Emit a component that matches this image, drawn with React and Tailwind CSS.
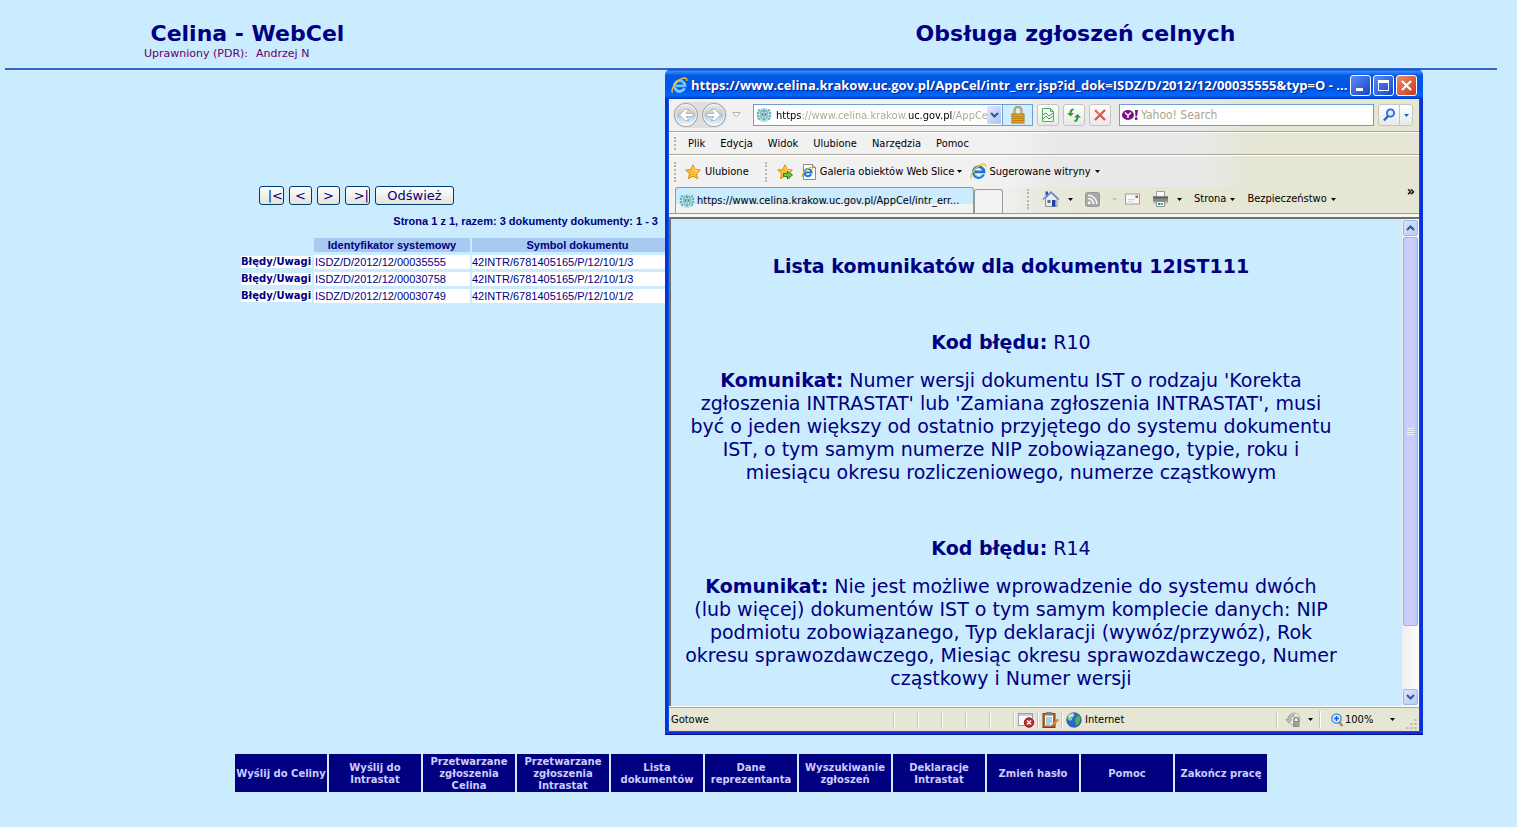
import React from 'react';

const documents = [
  { id: 'ISDZ/D/2012/12/00035555', symbol: '42INTR/6781405165/P/12/10/1/3' },
  { id: 'ISDZ/D/2012/12/00030758', symbol: '42INTR/6781405165/P/12/10/1/3' },
  { id: 'ISDZ/D/2012/12/00030749', symbol: '42INTR/6781405165/P/12/10/1/2' },
];

const navItems = [
  'Wyślij do Celiny',
  'Wyślij do Intrastat',
  'Przetwarzane zgłoszenia Celina',
  'Przetwarzane zgłoszenia Intrastat',
  'Lista dokumentów',
  'Dane reprezentanta',
  'Wyszukiwanie zgłoszeń',
  'Deklaracje Intrastat',
  'Zmień hasło',
  'Pomoc',
  'Zakończ pracę',
];

const menuItems = ['Plik', 'Edycja', 'Widok', 'Ulubione', 'Narzędzia', 'Pomoc'];

const messages = [
  {
    code: 'R10',
    text: "Numer wersji dokumentu IST o rodzaju 'Korekta zgłoszenia INTRASTAT' lub 'Zamiana zgłoszenia INTRASTAT', musi być o jeden większy od ostatnio przyjętego do systemu dokumentu IST, o tym samym numerze NIP zobowiązanego, typie, roku i miesiącu okresu rozliczeniowego, numerze cząstkowym",
  },
  {
    code: 'R14',
    text: 'Nie jest możliwe wprowadzenie do systemu dwóch (lub więcej) dokumentów IST o tym samym komplecie danych: NIP podmiotu zobowiązanego, Typ deklaracji (wywóz/przywóz), Rok okresu sprawozdawczego, Miesiąc okresu sprawozdawczego, Numer cząstkowy i Numer wersji',
  },
];

// Icons

function IeIcon({ color = '#1b78d0' }) {
  return (
    <svg width="17" height="17" viewBox="0 0 17 17" className="shrink-0">
      <path d="M13.6 11.2A5.4 5.4 0 1 1 14 8.8H5" fill="none" stroke={color} strokeWidth="2.8" />
      <path d="M12.8 11.2A4.6 4.6 0 0 1 4.6 11" fill="none" stroke="#9adcff" strokeWidth="1" />
      <path d="M1.6 15.6C-.6 13 4 5.6 9.4 2.4 13 .4 16.4.4 15.6 3.8" fill="none" stroke="#f7c02c" strokeWidth="1.5" />
    </svg>
  );
}

function IePageIcon() {
  return (
    <svg width="16" height="16" viewBox="0 0 16 16" className="shrink-0">
      <path d="M2.5.5h9l3 3v12h-12z" fill="#fff" stroke="#8a8a8a" />
      <path d="M11.5.5v3h3" fill="#ddd" stroke="#8a8a8a" />
      <path d="M10.2 10.2A3.6 3.6 0 1 1 10.6 8.4H4.5" fill="none" stroke="#1b78d0" strokeWidth="2" />
      <path d="M1 13C.4 10.6 4 5.8 8 4c2.600-1 4-.6 3.400 1.400" fill="none" stroke="#f0b41c" strokeWidth="1.2" />
    </svg>
  );
}

function CrestIcon() {
  return (
    <svg width="16" height="16" viewBox="0 0 16 16" className="shrink-0">
      <circle cx="8" cy="8" r="7" fill="#b4e0e3" />
      <path d="M3.500 2.500C1 5 1 10 4 13M12.500 2.500C15 5 15 10 12 13" fill="none" stroke="#5fb0ba" strokeWidth="2" strokeDasharray="2 1" />
      <path d="M5 4h6v4c0 3-1.500 4-3 5-1.500-1-3-2-3-5z" fill="#d9f2f3" stroke="#5a9fac" />
      <path d="M8 2v11M6.500 6v3M9.500 6v3" stroke="#4f8f9c" />
    </svg>
  );
}

function StarIcon({ withArrow = false }) {
  return (
    <svg width="16" height="16" viewBox="0 0 16 16" className="shrink-0">
      <path d="M8 .8l2.200 4.700 5.200.6-3.900 3.500 1.100 5.100L8 12.200l-4.600 2.500 1.100-5.100L.6 6.100l5.200-.6z" fill="#fbbd2c" stroke="#e08a12" />
      <path d="M8 3l1.500 3.300 3 .4-2.500 1.800" fill="none" stroke="#ffe595" />
      {withArrow && <path d="M6.500 9.500h4V7.200L15.500 11l-5 3.800v-2.300h-4z" fill="#5ecb46" stroke="#24861d" />}
    </svg>
  );
}

function RoundArrow({ flip = false }) {
  return (
    <svg width="26" height="26" viewBox="0 0 26 26">
      <defs>
        <linearGradient id="roundFill" x1="0" y1="0" x2="0" y2="1">
          <stop offset="0" stopColor="#ededed" />
          <stop offset=".5" stopColor="#c2c4c6" />
          <stop offset=".62" stopColor="#b9daf0" />
          <stop offset="1" stopColor="#f6fcff" />
        </linearGradient>
      </defs>
      <circle cx="13" cy="13" r="11.500" fill="url(#roundFill)" stroke="#9a9a9a" />
      <circle cx="13" cy="13" r="10.400" fill="none" stroke="#fff" strokeOpacity=".8" />
      <path
        d={flip ? 'M6 11.500h7L10 7.500h4l5.500 5.500-5.500 5.500h-4l3-4H6z' : 'M20 11.500h-7l3-4h-4L6.500 13l5.500 5.500h4l-3-4h7z'}
        fill="#fff"
        stroke="#a9adb0"
        strokeWidth=".8"
      />
    </svg>
  );
}

function LockIcon() {
  return (
    <svg width="16" height="18" viewBox="0 0 16 18">
      <path d="M4.500 9V4.500a3.500 3.500 0 0 1 7 0V9" fill="none" stroke="#8f7a3a" strokeWidth="2" />
      <path d="M4.500 9V4.500a3.500 3.500 0 0 1 7 0V9" fill="none" stroke="#d9cf9c" strokeWidth=".8" />
      <rect x="2" y="8" width="12" height="9" fill="#e8a91c" stroke="#a87410" />
      <path d="M3 10.500h10M3 12.500h10M3 14.500h10" stroke="#b97c10" />
    </svg>
  );
}

function CompatIcon() {
  return (
    <svg width="14" height="16" viewBox="0 0 14 16">
      <path d="M1.500 1.500h8l3 3v10h-11z" fill="#f3fbf2" stroke="#5aa85a" />
      <path d="M9.500 1.500v3h3" fill="none" stroke="#5aa85a" />
      <path d="M2 8l3-2 3 3 4-3M2 12l3-3 3 3 4-3" fill="none" stroke="#3f9a43" />
    </svg>
  );
}

function RefreshIcon() {
  return (
    <svg width="16" height="16" viewBox="0 0 16 16">
      <path d="M7.500 2.500C5.500 2.500 4.500 4 4.500 6.500" fill="none" stroke="#2c9c33" strokeWidth="2" />
      <path d="M1 6h7L4.500 9.500z" fill="#2c9c33" />
      <path d="M8.500 14c2 0 3-1.500 3-4.500" fill="none" stroke="#2c9c33" strokeWidth="2" />
      <path d="M8 10.500h7L11.500 7z" fill="#2c9c33" />
    </svg>
  );
}

function StopIcon() {
  return (
    <svg width="14" height="14" viewBox="0 0 14 14">
      <path d="M2 2l10 10M12 2L2 12" stroke="#d9534f" strokeWidth="2.200" />
      <path d="M2 2l5 5" stroke="#ee8d87" strokeWidth="1" />
    </svg>
  );
}

function YahooIcon() {
  return (
    <svg width="17" height="14" viewBox="0 0 17 14" className="shrink-0">
      <ellipse cx="6" cy="7" rx="6" ry="5" fill="#7b1082" />
      <path d="M3 4.500l3 3 3-3M6 7.500V10" fill="none" stroke="#fff" strokeWidth="1.500" />
      <path d="M13 2h3l-1 6.500h-1.500z" fill="#7b1082" />
      <circle cx="14.200" cy="10.700" r="1.400" fill="#7b1082" />
    </svg>
  );
}

function SearchIcon() {
  return (
    <svg width="14" height="14" viewBox="0 0 14 14">
      <circle cx="8.500" cy="5" r="3.600" fill="#d9eeff" stroke="#2367d1" strokeWidth="1.800" />
      <path d="M6 8l-4 4.500" stroke="#2367d1" strokeWidth="2.400" />
    </svg>
  );
}

function HomeIcon() {
  return (
    <svg width="18" height="18" viewBox="0 0 18 18">
      <path d="M3.500 1.500h2.500v4h-2.500z" fill="#2a48c8" />
      <path d="M3.500 8.500L9 3l6 5.500v8H3.500z" fill="#e9ebee" stroke="#8c94a0" />
      <path d="M1 9.500L9 2l8 7.500" fill="none" stroke="#5d8fd0" strokeWidth="1.600" />
      <rect x="10" y="10" width="3.500" height="6.500" fill="#1e3fae" />
      <rect x="5.500" y="10" width="3" height="3" fill="#6b6b6b" />
    </svg>
  );
}

function FeedIcon() {
  return (
    <svg width="15" height="15" viewBox="0 0 15 15">
      <rect x=".5" y=".5" width="14" height="14" rx="2" fill="#a9a9a9" stroke="#989898" />
      <circle cx="4.200" cy="10.800" r="1.400" fill="#fff" />
      <path d="M3 6.500a5.500 5.500 0 0 1 5.500 5.500M3 3.200A8.800 8.800 0 0 1 11.800 12" fill="none" stroke="#fff" strokeWidth="1.500" />
    </svg>
  );
}

function MailIcon() {
  return (
    <svg width="15" height="12" viewBox="0 0 15 12">
      <rect x=".5" y="1" width="14" height="10" fill="#f7f7f7" stroke="#9d9d9d" />
      <rect x="10.500" y="2.500" width="2.500" height="2.500" fill="#e04a3c" />
      <path d="M3 6.500h7M3 8.500h5" stroke="#d5d5d5" />
    </svg>
  );
}

function PrinterIcon() {
  return (
    <svg width="17" height="16" viewBox="0 0 17 16">
      <path d="M4.500.5h8v6h-8z" fill="#fafafa" stroke="#9c9c9c" />
      <path d="M1 5.500h15v6H1z" fill="#8a8a8a" />
      <path d="M1 5.500h15v2H1z" fill="#5f5f5f" />
      <path d="M1 10.500h15v2H1z" fill="#bcbcbc" />
      <path d="M4.500 10.500h8v5h-8z" fill="#fff" stroke="#8b8b8b" />
      <path d="M6 13h2.500" stroke="#2f7fd0" strokeWidth="2" />
      <path d="M9 13h2" stroke="#5fae4e" strokeWidth="2" />
    </svg>
  );
}

function BlockedPageIcon() {
  return (
    <svg width="17" height="16" viewBox="0 0 17 16">
      <rect x=".5" y="1.500" width="14" height="12" fill="#fbfbfb" stroke="#9c9cae" />
      <path d="M1 3h13" stroke="#b9bccb" strokeWidth="1.500" />
      <circle cx="11" cy="10.500" r="4.700" fill="#c6282c" stroke="#8e1b1e" />
      <path d="M9 8.500l4 4M13 8.500l-4 4" stroke="#fff" strokeWidth="1.500" />
    </svg>
  );
}

function ClipboardIcon() {
  return (
    <svg width="17" height="16" viewBox="0 0 17 16" className="shrink-0">
      <rect x="1" y="1.500" width="12" height="14" fill="#b5692c" stroke="#7e431a" />
      <rect x="3" y="3.500" width="8" height="10" fill="#eefaff" />
      <path d="M4 6h6M4 8h6M4 10h6M4 12h4" stroke="#58aabd" />
      <rect x="4" y="0" width="6" height="3" fill="#7c8187" />
      <path d="M15.500 7l-5 5-1 2 2-.8 5-5z" fill="#f2a73a" stroke="#a55a1e" strokeWidth=".6" />
    </svg>
  );
}

function GlobeIcon() {
  return (
    <svg width="16" height="16" viewBox="0 0 16 16" className="shrink-0">
      <circle cx="8" cy="8" r="7.300" fill="#2c66c9" stroke="#1d3f8d" strokeWidth=".6" />
      <path d="M2 4c2-2.500 4-3 5.500-2.600L8.500 4l-2 1.500L6 8 4 9 1.500 7z" fill="#7fd0a0" />
      <path d="M9 7l3-4 2.500 3c0 3-1.500 6-4 8L9.500 11z" fill="#4fb648" />
      <path d="M3 5c1.500-2.500 3-2.500 4.500-2" fill="none" stroke="#c9ecfb" strokeWidth="2" />
    </svg>
  );
}

function ProtectedIcon() {
  return (
    <svg width="17" height="16" viewBox="0 0 17 16">
      <circle cx="9" cy="7" r="6" fill="#eeeeec" stroke="#a9a9a4" />
      <path d="M9 2.500c-4 0-6 2-6 5H.8L4 11l3-3.500H5.200C5.500 5.500 7 4.500 9 4.500z" fill="#bdbdb9" stroke="#92928e" strokeWidth=".6" />
      <path d="M9 9V7.500a2.200 2.200 0 0 1 4.400 0V9" fill="none" stroke="#7f7f7b" strokeWidth="1.200" />
      <rect x="8" y="9" width="6.500" height="6" fill="#8f8f8b" />
      <path d="M8 11h6.500M8 13h6.500" stroke="#b6b6b2" strokeWidth=".7" />
    </svg>
  );
}

function ZoomIcon() {
  return (
    <svg width="13" height="14" viewBox="0 0 13 14">
      <path d="M7.500 8.500l4 4.500" stroke="#a9814f" strokeWidth="2.200" />
      <circle cx="5.500" cy="5.500" r="4.600" fill="#d9efff" stroke="#4486d8" strokeWidth="1.400" />
      <path d="M5.500 3v5M3 5.500h5" stroke="#1f5fc4" strokeWidth="1.600" />
    </svg>
  );
}

function Caret({ color = '#000' }) {
  return (
    <svg width="5" height="3" viewBox="0 0 5 3" className="shrink-0">
      <path d="M0 0h5L2.500 3z" fill={color} />
    </svg>
  );
}

function Chevron({ up = false }) {
  return (
    <svg width="9" height="6" viewBox="0 0 9 6">
      <path d={up ? 'M1 5l3.500-3.500L8 5' : 'M1 1l3.500 3.500L8 1'} fill="none" stroke="#36568c" strokeWidth="2" />
    </svg>
  );
}

function Grip() {
  return <span className="h-[20px] w-0 shrink-0 border-l-2 border-dotted border-[#b8b6a8]" />;
}

function ToolButton({ label, children }) {
  return (
    <button
      type="button"
      aria-label={label}
      className="flex h-[22px] w-[22px] items-center justify-center rounded-[3px] border border-[#c5c5c0] bg-gradient-to-b from-white to-[#e9e9e9]"
    >
      {children}
    </button>
  );
}

function PagerButton({ children, className }) {
  return (
    <button
      type="button"
      className={`h-[19px] rounded-[3px] border border-[#003c74] bg-gradient-to-b from-white to-[#e3e2da] text-[13px] leading-[16px] ${className}`}
    >
      {children}
    </button>
  );
}

// Main page

function PageHeader() {
  return (
    <header className="flex h-[70px] justify-between border-b-2 border-[#3366cc]">
      <div className="w-[32.5%] pt-[21px]">
        <h1 className="text-center text-[22px] leading-[26px] font-bold">Celina - WebCel</h1>
        <p className="flex gap-2 pl-[139px] text-[11px] leading-[14px] text-[#660066]">
          <span>Uprawniony (PDR):</span>
          <span>Andrzej N</span>
        </p>
      </div>
      <h2 className="w-[56.5%] pt-[21px] text-center text-[22px] leading-[26px] font-bold">Obsługa zgłoszeń celnych</h2>
    </header>
  );
}

function DocumentList() {
  return (
    <main className="mt-[116px] ml-[234px] w-[446px]">
      <div className="flex gap-[5px] pl-5">
        <PagerButton className="w-[25px] text-right">|&lt;</PagerButton>
        <PagerButton className="w-[23px]">&lt;</PagerButton>
        <PagerButton className="w-[23px]">&gt;</PagerButton>
        <PagerButton className="w-[25px] text-right">&gt;|</PagerButton>
        <PagerButton className="w-[79px]">Odśwież</PagerButton>
      </div>
      <p className="mt-2 pr-[27px] text-right font-['Liberation_Sans',sans-serif] text-[11px] leading-[16px] font-bold">
        Strona 1 z 1, razem: 3 dokumenty dokumenty: 1 - 3
      </p>
      <table className="mt-[6px] w-full table-fixed border-separate border-spacing-x-[2px] border-spacing-y-[3px] font-['Liberation_Sans',sans-serif] text-[11px] leading-[14px]">
        <colgroup>
          <col className="w-[71px]" />
          <col className="w-[156px]" />
          <col />
        </colgroup>
        <thead>
          <tr>
            <td />
            <th className="bg-[#a6caf0] p-0">Identyfikator systemowy</th>
            <th className="bg-[#a6caf0] p-0">Symbol dokumentu</th>
          </tr>
        </thead>
        <tbody>
          {documents.map(doc => (
            <tr key={doc.id}>
              <td className="p-0 whitespace-nowrap">
                <a href="#bledy" className="block bg-white font-['DejaVu_Sans',sans-serif] text-[10px] leading-[12px] font-bold">
                  Błędy/Uwagi
                </a>
              </td>
              <td className="bg-white p-0 px-px">{doc.id}</td>
              <td className="bg-white p-0">{doc.symbol}</td>
            </tr>
          ))}
        </tbody>
      </table>
    </main>
  );
}

function BottomNav() {
  return (
    <nav className="mt-auto flex justify-center gap-[2px] pb-[35px]">
      {navItems.map(item => (
        <a
          key={item}
          href="#menu"
          className="flex h-[38px] w-[92px] items-center justify-center bg-[#000080] pt-[2px] text-center text-[10px] leading-[12px] font-bold text-[#ccccff]"
        >
          {item}
        </a>
      ))}
    </nav>
  );
}

// Popup browser window

function TitleBar() {
  const buttonClass = 'flex h-[21px] w-[21px] items-center justify-center rounded-[3px] border border-white';
  return (
    <div className="flex h-[30px] items-center gap-[2px] rounded-t-[6px] bg-[linear-gradient(#0a3cc8,#2f8cff_8%,#0558e0_22%,#0054e3_60%,#0066ff_88%,#0036bd)] pt-[2px] pr-[6px] pl-[6px]">
      <IeIcon color="#6cc4ff" />
      <h2 className="min-w-0 flex-1 overflow-hidden pl-px font-['Open_Sans',sans-serif] text-[13px] leading-[20px] font-bold whitespace-nowrap text-white [text-shadow:1px_1px_1px_#0a1883]">
        https://www.celina.krakow.uc.gov.pl/AppCel/intr_err.jsp?id_dok=ISDZ/D/2012/12/00035555&amp;typ=O - ...
      </h2>
      <button type="button" aria-label="Minimalizuj" className={`${buttonClass} bg-gradient-to-br from-[#5a8cf5] to-[#1c44c8]`}>
        <svg width="13" height="13" viewBox="0 0 13 13">
          <path d="M2 10.500h7" stroke="#fff" strokeWidth="3" />
        </svg>
      </button>
      <button type="button" aria-label="Maksymalizuj" className={`${buttonClass} bg-gradient-to-br from-[#5a8cf5] to-[#1c44c8]`}>
        <svg width="13" height="13" viewBox="0 0 13 13">
          <path d="M1.500 2.500h10v9h-10z" fill="none" stroke="#fff" />
          <path d="M1 2.500h11" stroke="#fff" strokeWidth="3" />
        </svg>
      </button>
      <button type="button" aria-label="Zamknij" className={`${buttonClass} bg-gradient-to-br from-[#f08a6a] to-[#c8350f]`}>
        <svg width="13" height="13" viewBox="0 0 13 13">
          <path d="M2 2l9 9M11 2l-9 9" stroke="#fff" strokeWidth="2.200" />
        </svg>
      </button>
    </div>
  );
}

function AddressBar() {
  return (
    <div className="flex h-[33px] items-center border-b border-[#aca899] pr-[6px] pl-[4px]">
      <div className="flex rounded-full bg-[#dedede]">
        <button type="button" aria-label="Wstecz" className="block">
          <RoundArrow />
        </button>
        <button type="button" aria-label="Dalej" className="ml-[2px] block">
          <RoundArrow flip />
        </button>
      </div>
      <svg width="9" height="6" viewBox="0 0 9 6" className="ml-[5px]">
        <path d="M.8.5h7.400L4.500 5z" fill="#fff" stroke="#b0b0b0" />
      </svg>
      <div className="ml-3 flex h-[22px] w-[280px] items-center border border-[#6b9fd0] bg-white">
        <span className="pl-[2px]">
          <CrestIcon />
        </span>
        <input
          aria-label="Adres"
          defaultValue="https://www.celina.krakow.uc.gov.pl/AppCel/intr_err.jsp"
          className="h-full min-w-0 flex-1 bg-[linear-gradient(90deg,#000_30px,#a8a58c_30px,#a8a58c_136px,#000_136px,#000_180px,#a8a58c_180px)] bg-clip-text pl-1 text-[11px] text-transparent outline-none"
        />
        <button
          type="button"
          aria-label="Pokaż adresy"
          className="flex h-[18px] w-[14px] items-center justify-center bg-gradient-to-br from-[#e0e8ff] to-[#a8c4f8]"
        >
          <Chevron />
        </button>
        <button
          type="button"
          aria-label="Raport zabezpieczeń"
          className="ml-px flex h-full w-[30px] items-center justify-center border-l border-[#6b9fd0] bg-[#d2edff]"
        >
          <LockIcon />
        </button>
      </div>
      <div className="ml-1 flex gap-1">
        <ToolButton label="Widok zgodności">
          <CompatIcon />
        </ToolButton>
        <ToolButton label="Odśwież stronę">
          <RefreshIcon />
        </ToolButton>
        <ToolButton label="Zatrzymaj">
          <StopIcon />
        </ToolButton>
      </div>
      <div className="ml-2 flex h-[22px] min-w-0 flex-1 items-center border border-[#6b9fd0] bg-white pl-[2px]">
        <YahooIcon />
        <input
          aria-label="Szukaj"
          placeholder="Yahoo! Search"
          className="min-w-0 flex-1 pl-[2px] text-[12px] outline-none placeholder:text-[#a8a58c]"
        />
      </div>
      <div className="ml-1 flex h-[22px] rounded-[3px] border border-[#c5c5c0] bg-gradient-to-b from-white to-[#e9e9e9]">
        <button type="button" aria-label="Znajdź" className="flex w-[21px] items-center justify-center border-r border-[#c5c5c0]">
          <SearchIcon />
        </button>
        <button type="button" aria-label="Opcje wyszukiwania" className="flex w-3 items-center justify-center">
          <Caret color="#1f66b8" />
        </button>
      </div>
    </div>
  );
}

function MenuBar() {
  return (
    <div className="flex h-[23px] items-center gap-[15px] border-t border-b border-t-white border-b-[#aca899] pl-[5px]">
      <span className="h-[13px] w-0 border-l-2 border-dotted border-[#b8b6a8]" />
      {menuItems.map(item => (
        <button key={item} type="button" className="first-of-type:-ml-[3px]">
          {item}
        </button>
      ))}
    </div>
  );
}

function FavoritesBar() {
  return (
    <div className="flex h-[32px] items-center border-t border-white pl-[5px]">
      <Grip />
      <button type="button" className="ml-[9px] flex items-center gap-1">
        <StarIcon />
        Ulubione
      </button>
      <span className="ml-4 flex">
        <Grip />
      </span>
      <button type="button" aria-label="Dodaj do paska ulubionych" className="ml-[10px]">
        <StarIcon withArrow />
      </button>
      <button type="button" className="ml-2 flex items-center gap-[3px]">
        <IePageIcon />
        Galeria obiektów Web Slice
        <Caret />
      </button>
      <button type="button" className="ml-2 flex items-center gap-[2px]">
        <IeIcon />
        Sugerowane witryny
        <span className="pl-[2px]">
          <Caret />
        </span>
      </button>
    </div>
  );
}

function TabBar() {
  return (
    <div className="flex h-[27px] border-b border-[#919b9c] bg-[linear-gradient(90deg,transparent_44%,#e9e9e0_50%,#e5e6d4_60%)] pl-[6px]">
      <button
        type="button"
        className="flex w-[299px] items-center gap-[2px] rounded-t-[3px] border border-b-0 border-[#919b9c] bg-[linear-gradient(#cbebff_65%,#f3f3f3_65%)] pl-[3px] whitespace-nowrap"
      >
        <CrestIcon />
        https://www.celina.krakow.uc.gov.pl/AppCel/intr_err...
      </button>
      <button
        type="button"
        aria-label="Nowa karta"
        className="mt-[2px] w-[29px] rounded-t-[3px] border border-b-0 border-[#919b9c] bg-[#f3f3f3]"
      />
      <div className="flex h-6 flex-1 items-center pl-6">
        <Grip />
        <button type="button" aria-label="Strona główna" className="ml-[13px] flex items-center gap-2">
          <HomeIcon />
          <Caret />
        </button>
        <button type="button" aria-label="Kanały" className="ml-3 flex items-center gap-3">
          <FeedIcon />
          <Caret color="#c0bfb0" />
        </button>
        <button type="button" aria-label="Poczta" className="ml-2">
          <MailIcon />
        </button>
        <button type="button" aria-label="Drukuj" className="ml-3 flex items-center gap-2">
          <PrinterIcon />
          <Caret />
        </button>
        <button type="button" className="ml-3 flex items-center gap-1">
          Strona
          <Caret />
        </button>
        <button type="button" className="ml-3 flex items-center gap-1">
          Bezpieczeństwo
          <Caret />
        </button>
        <button type="button" className="mr-1 mb-4 ml-auto text-[14px] leading-[14px] font-bold">
          »
        </button>
      </div>
    </div>
  );
}

function ScrollBar() {
  const buttonClass =
    'flex h-[16px] shrink-0 items-center justify-center rounded-[2px] border border-[#9db8e8] bg-gradient-to-br from-[#dbe4ff] to-[#b4ccf8]';
  return (
    <div className="flex w-[17px] flex-col bg-gradient-to-r from-[#eeeeee] to-white p-px">
      <button type="button" aria-label="W górę" className={buttonClass}>
        <Chevron up />
      </button>
      <div className="mt-px flex h-[389px] items-center justify-center rounded-[2px] border border-[#98b4e4] bg-[linear-gradient(90deg,#b4d4f6,#ccccff_25%,#ccccff_75%,#a8ccf0)]">
        <span className="h-[7px] w-[7px] bg-[repeating-linear-gradient(#eef4ff_0_1px,#a8ccf0_1px_2px)]" />
      </div>
      <button type="button" aria-label="W dół" className={`mt-auto ${buttonClass}`}>
        <Chevron />
      </button>
    </div>
  );
}

function MessageList() {
  return (
    <div className="flex h-[489px] border-t-2 border-l-2 border-[#716f64] bg-[#cbebff]">
      <div className="flex-1 overflow-hidden pt-9 pr-16 pl-[13px] text-center font-['DejaVu_Sans',sans-serif] text-[19px] leading-[23px] text-[#000080]">
        <h3 className="font-bold">Lista komunikatów dla dokumentu 12IST111</h3>
        {messages.map(message => (
          <section key={message.code} className="mt-[53px]">
            <p>
              <b>Kod błędu:</b> {message.code}
            </p>
            <p className="mt-[15px]">
              <b>Komunikat:</b> {message.text}
            </p>
          </section>
        ))}
      </div>
      <ScrollBar />
    </div>
  );
}

function StatusBar() {
  const cell = 'flex h-[17px] items-center border-l border-[#c5c2b8] shadow-[inset_1px_0_0_#fff]';
  return (
    <div className="flex h-[24px] items-center border-t border-[#aca899] bg-[linear-gradient(#e5e6d4_85%,#efdcc8)]">
      <span className="flex-1 pl-[2px]">Gotowe</span>
      <span className={`${cell} w-6`} />
      <span className={`${cell} w-6`} />
      <span className={`${cell} w-6`} />
      <span className={`${cell} w-6`} />
      <span className={`${cell} w-6`} />
      <span className={`${cell} w-6 pl-1`}>
        <BlockedPageIcon />
      </span>
      <span className={`${cell} w-6 pl-1`}>
        <ClipboardIcon />
      </span>
      <span className={`${cell} w-[215px] gap-[3px] pl-1`}>
        <GlobeIcon />
        Internet
      </span>
      <span className={`${cell} w-[43px] gap-[6px] pl-2`}>
        <ProtectedIcon />
        <Caret />
      </span>
      <span className={`${cell} w-[86px] gap-px pl-[11px]`}>
        <ZoomIcon />
        <span className="w-11">100%</span>
        <Caret />
      </span>
      <svg width="14" height="14" viewBox="0 0 14 14" className="self-end">
        <path d="M9.500 3h2M5.500 7h2M9.500 7h2M1.500 11h2M5.500 11h2M9.500 11h2" stroke="#b8b4a2" strokeWidth="2" />
      </svg>
    </div>
  );
}

function BrowserWindow() {
  return (
    <div className="absolute top-[69px] left-[665px] w-[758px] rounded-t-[7px] bg-[#0831d9] font-['DejaVu_Sans_Condensed','DejaVu_Sans',sans-serif] text-[11px] leading-[14px] text-black">
      <TitleBar />
      <div className="mx-[3px] border-x border-[#0855dd] bg-[linear-gradient(90deg,#f1f1f1_45%,#e9e9e9_52%,#e9e9e9_70%,#e5e6d4_78%)]">
        <AddressBar />
        <MenuBar />
        <FavoritesBar />
        <TabBar />
        <div className="border-t-[3px] border-b border-t-[#f6f6f6] border-b-white">
          <MessageList />
        </div>
        <StatusBar />
      </div>
      <div className="h-1 border-t border-b border-t-[#0855dd] border-b-[#00138c]" />
    </div>
  );
}

export default function App() {
  return (
    <div className="relative flex min-h-screen flex-col overflow-hidden bg-[#cbebff] pr-[20px] pl-[5px] font-['DejaVu_Sans',sans-serif] text-[#000080]">
      <PageHeader />
      <DocumentList />
      <BottomNav />
      <BrowserWindow />
    </div>
  );
}
